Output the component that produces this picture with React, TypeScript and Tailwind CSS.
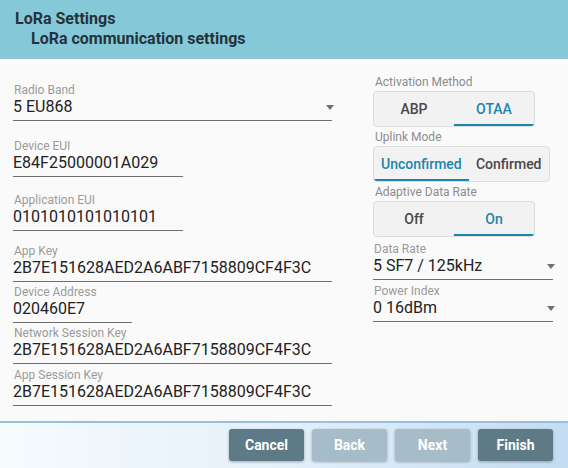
import React from 'react';

const font = { fontFamily: 'Roboto, "Noto Sans", sans-serif' };

function Arrow() {
  return (
    <svg width="8" height="5" viewBox="0 0 8 5" className="-mr-[2px]">
      <path d="M0 0 L8 0 L4 5 Z" fill="#707070" />
    </svg>
  );
}

function Field({
  label,
  value,
  width,
  select,
  className = '',
}: {
  label: string;
  value: string;
  width: string;
  select?: boolean;
  className?: string;
}) {
  return (
    <div className={`${width} ${className} border-b border-[#6f6f6f] pb-[4px]`}>
      <div className="text-[12px] leading-[14px] text-[#9a9a9a] pl-[1px]">{label}</div>
      <div className="flex items-center justify-between mt-[1px]">
        <span className="text-[16px] leading-[18px] text-[#222]">{value}</span>
        {select && <Arrow />}
      </div>
    </div>
  );
}

function Toggle({
  label,
  options,
  active,
  className = '',
}: {
  label: string;
  options: string[];
  active: number;
  className?: string;
}) {
  return (
    <div className={className}>
      <div className="text-[12px] leading-[14px] text-[#8c8c8c] pl-[2px] mb-[2px]">{label}</div>
      <div className="inline-flex h-[36px] rounded-[4px] border border-[#dcdcdc] bg-[#f2f2f2] overflow-hidden">
        {options.map((o, i) => (
          <div
            key={o}
            className={`min-w-[80px] px-[7px] flex items-center justify-center text-[14px] font-medium border-b-2 pt-[2px] ${
              i === active ? 'text-[#1b86ad] border-[#1b86ad]' : 'text-[#484848] border-transparent'
            }`}
          >
            {o}
          </div>
        ))}
      </div>
    </div>
  );
}

export default function App() {
  return (
    <div className="w-[568px] h-[468px] flex flex-col bg-[#fafafa] overflow-hidden" style={font}>
      <div className="h-[59px] bg-[#85c8d8] border-b border-[#9cbfdc] text-[#263238] font-bold">
        <div className="pl-[15px] pt-[9px] text-[16px] leading-[19px]">LoRa Settings</div>
        <div className="pl-[31px] pt-[1px] text-[16px] leading-[20px]">LoRa communication settings</div>
      </div>

      <div className="flex-1 flex px-[13px]">
        <div className="w-[319px] flex flex-col pt-[24px]">
          <Field label="Radio Band" value="5 EU868" width="w-[319px]" select />
          <Field label="Device EUI" value="E84F25000001A029" width="w-[170px]" className="mt-[18px]" />
          <Field label="Application EUI" value="0101010101010101" width="w-[170px]" className="mt-[16px]" />
          <Field label="App Key" value="2B7E151628AED2A6ABF7158809CF4F3C" width="w-[319px]" className="mt-[13px]" />
          <Field label="Device Address" value="020460E7" width="w-[119px]" className="mt-[3px]" />
          <Field label="Network Session Key" value="2B7E151628AED2A6ABF7158809CF4F3C" width="w-[319px]" className="mt-[3px]" />
          <Field label="App Session Key" value="2B7E151628AED2A6ABF7158809CF4F3C" width="w-[319px]" className="mt-[4px]" />
        </div>
        <div className="ml-[41px] w-[180px] flex flex-col pt-[16px]">
          <Toggle label="Activation Method" options={['ABP', 'OTAA']} active={1} />
          <Toggle label="Uplink Mode" options={['Unconfirmed', 'Confirmed']} active={0} className="mt-[3px]" />
          <Toggle label="Adaptive Data Rate" options={['Off', 'On']} active={1} className="mt-[3px]" />
          <Field label="Data Rate" value="5 SF7 / 125kHz" width="w-[180px]" select className="mt-[5px]" />
          <Field label="Power Index" value="0 16dBm" width="w-[180px]" select className="mt-[4px]" />
        </div>
      </div>

      <div className="h-[47px] border-t-2 border-[#97bfe0] bg-gradient-to-r from-[#f6fbfe] via-[#e4f0fa] to-[#c3dcf1] flex justify-end gap-[8px] pr-[15px] pt-[6px]">
        {[
          ['Cancel', true],
          ['Back', false],
          ['Next', false],
          ['Finish', true],
        ].map(([t, on]) => (
          <button
            key={t as string}
            className={`w-[75px] h-[32px] rounded-[3px] text-[14px] font-bold text-white shadow-[0_1px_3px_rgba(0,0,0,0.3)] ${
              on ? 'bg-[#5e7a86]' : 'bg-[#a6bdc9] text-[#e8eff3] shadow-[0_1px_2px_rgba(0,0,0,0.12)]'
            }`}
          >
            {t as string}
          </button>
        ))}
      </div>
    </div>
  );
}
